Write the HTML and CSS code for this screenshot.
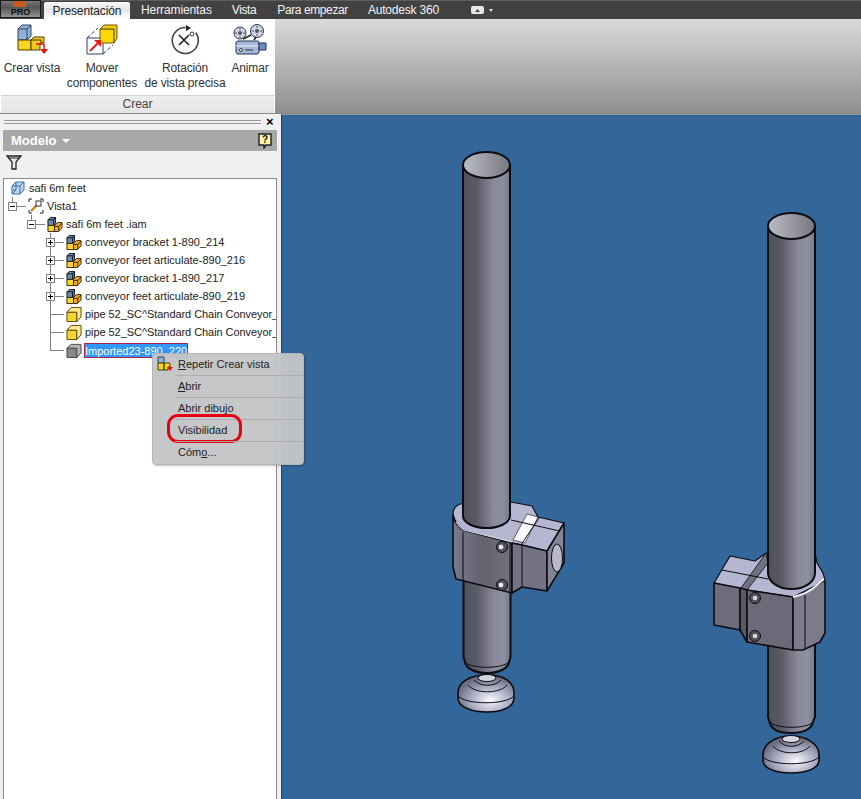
FILE: index.html
```html
<!DOCTYPE html>
<html lang="es">
<head>
<meta charset="utf-8">
<title>Presentación</title>
<link rel="stylesheet" href="styles.css">
</head>
<body>
<svg class="defs" aria-hidden="true">
  <defs>
    <linearGradient id="pipeL" x1="0" x2="1" y1="0" y2="0"><stop offset="0" stop-color="#50505c"/><stop offset=".3" stop-color="#5c5c69"/><stop offset=".65" stop-color="#8a8a9b"/><stop offset=".85" stop-color="#8f8fa2"/><stop offset="1" stop-color="#77778a"/></linearGradient>
    <linearGradient id="pipeIn" x1="0" x2="1" y1="0" y2="0"><stop offset="0" stop-color="#bcbcc6"/><stop offset="1" stop-color="#77777f"/></linearGradient>
    <linearGradient id="faceL" x1="0" x2="1" y1="0" y2="0"><stop offset="0" stop-color="#7a7a8e"/><stop offset=".5" stop-color="#62626f"/><stop offset="1" stop-color="#727280"/></linearGradient>
    <radialGradient id="foot" cx=".58" cy=".68" r=".62"><stop offset="0" stop-color="#fbfbff"/><stop offset=".55" stop-color="#adadc4"/><stop offset="1" stop-color="#6b6b80"/></radialGradient>
    <symbol id="asm" viewBox="0 0 17 17">
      <path d="M1 9.500V3.500L3.500 1H9V7L7 9.500z" fill="#6e86ab" stroke="#10151f"/>
      <path d="M1 3.500H7V9.500M7 3.500L9 1" fill="none" stroke="#10151f"/>
      <path d="M1 9.500H8V16H1z" fill="#f9d52a" stroke="#2e2504"/>
      <path d="M8 9.500L11 6.500H16V12L12 16H8z" fill="#f0aa2c" stroke="#2e2504"/>
      <path d="M8 10.500H12.500V16M12.500 10.500L16 7" fill="none" stroke="#2e2504"/>
    </symbol>
    <symbol id="part" viewBox="0 0 17 17">
      <path d="M1 16V6H11.500V16z" fill="#f7d52f" stroke="#54430a"/>
      <path d="M1 6L5.500 1H16V11L11.500 16V6z" fill="#fce98a" stroke="#54430a"/>
    </symbol>
    <symbol id="gray" viewBox="0 0 17 17">
      <path d="M1 16V6H11.500V16z" fill="#878787" stroke="#444"/>
      <path d="M1 6L5.500 2H16V11L11.500 16V6z" fill="#b5b5b5" stroke="#444"/>
    </symbol>
  </defs>
</svg>

<header class="tabbar">
  <div class="appbtn"><span class="appflame"></span><span class="apppro">PRO</span></div>
  <nav class="tabs">
    <span class="tab tab-active">Presentación</span>
    <span class="tab tab-h">Herramientas</span>
    <span class="tab tab-v">Vista</span>
    <span class="tab tab-p">Para empezar</span>
    <span class="tab tab-a">Autodesk 360</span>
    <span class="tabcam">
      <svg width="13" height="8" viewBox="0 0 13 8"><rect width="13" height="8" rx="2" fill="#e8e8e8"/><path d="M4 6l2.500-3L9 6z" fill="#444"/></svg>
      <i class="caret"></i>
    </span>
  </nav>
</header>

<section class="ribbon">
  <div class="panel">
    <div class="tools">
      <div class="tool">
        <svg class="toolicon" width="32" height="32" viewBox="0 0 32 32">
          <path d="M2 16V5l4-4h9v11l-4 4z" fill="#8fb0dc" stroke="#33425c"/>
          <path d="M2 5h9v11M11 5l4-4" fill="none" stroke="#33425c"/>
          <path d="M2 26V16h13v10z" fill="#f7d51c" stroke="#4a3d05"/>
          <path d="M15 26V16l3-3h10v6h-4v7z" fill="#f3c91d" stroke="#4a3d05"/>
          <path d="M15 16h10v3" fill="none" stroke="#4a3d05"/>
          <path d="M20 20h8M28 20v5" fill="none" stroke="#e11" stroke-width="1.500"/>
          <path d="M24 25h8l-4 5z" fill="#e11"/>
        </svg>
        <span>Crear vista</span>
      </div>
      <div class="tool">
        <svg class="toolicon" width="32" height="32" viewBox="0 0 32 32">
          <path d="M1 30V14h16v16z" fill="#fff" stroke="#2f3f6a"/>
          <path d="M1 14l11-10M17 30l10-9" fill="none" stroke="#2f3f6a" stroke-dasharray="4 2"/>
          <path d="M14 19V5h14v14z" fill="#ffd80a" stroke="#6b5a05"/>
          <path d="M14 5l4-4h13v13l-3 5V5z" fill="#f3c81a" stroke="#6b5a05"/>
          <path d="M4 27l9-9" stroke="#e21b1b" stroke-width="2"/>
          <path d="M8 16h7v7z" fill="#e21b1b"/>
        </svg>
        <span>Mover<br>componentes</span>
      </div>
      <div class="tool">
        <svg class="toolicon" width="32" height="32" viewBox="0 0 32 32">
          <path d="M19 4A13 13 0 1 0 28 11" fill="none" stroke="#444" stroke-width="1.600" transform="rotate(-10 15 17)"/>
          <path d="M17 1l5 3-5 3z" fill="#222"/>
          <path d="M10 11l10 10M20 11L10 21" stroke="#222" stroke-width="1.600"/>
          <circle cx="23" cy="10" r="2" fill="none" stroke="#333"/>
        </svg>
        <span>Rotación<br>de vista precisa</span>
      </div>
      <div class="tool">
        <svg class="toolicon" width="34" height="32" viewBox="0 0 34 32">
          <circle cx="7" cy="9" r="6" fill="#cfd5e2" stroke="#2b3040"/>
          <circle cx="7" cy="9" r="2" fill="#4d5468"/>
          <path d="M7 4v2M7 12v2M2 9h2M10 9h2" stroke="#4d5468"/>
          <circle cx="24" cy="7" r="6.500" fill="#cfd5e2" stroke="#2b3040"/>
          <circle cx="24" cy="7" r="2" fill="#4d5468"/>
          <path d="M24 2v2M24 10v2M19 7h2M27 7h2" stroke="#4d5468"/>
          <path d="M10 15l8-4M21 16l2-3" stroke="#222" stroke-width="1.600"/>
          <rect x="3" y="17" width="23" height="13" rx="2" fill="#a6b8da" stroke="#26304c"/>
          <path d="M3 22h23" stroke="#eef2fa"/>
          <path d="M26 19h7v7h-7z" fill="#6f8fc9" stroke="#26304c"/>
          <circle cx="8" cy="26" r="1.500" fill="#fff" stroke="#333"/>
          <path d="M12 26h8" stroke="#333"/>
        </svg>
        <span>Animar</span>
      </div>
    </div>
    <div class="panelname">Crear</div>
  </div>
  <div class="ribbonfill"></div>
</section>

<main class="work">
  <aside class="browser">
    <div class="griprow"><span class="grip"></span><span class="close">×</span></div>
    <div class="modelhead">
      <span class="modeltitle">Modelo</span><i class="modelcaret"></i>
      <svg class="help" width="14" height="16" viewBox="0 0 14 16"><path d="M1 1h12v11H8l-2 3v-3H1z" fill="#fdf6a8" stroke="#222" stroke-width="1.400"/><text x="7" y="10" class="helpq">?</text></svg>
    </div>
    <div class="filter">
      <svg width="16" height="15" viewBox="0 0 16 15"><path d="M1 1h14L10 7v7H6V7z" fill="#e8e8e8" stroke="#222" stroke-width="1.300"/><path d="M3 3h10" stroke="#222"/></svg>
    </div>
    <div class="tree">
      <div class="row row-root">
        <svg class="ticon" width="16" height="16" viewBox="0 0 16 16"><path d="M2 6l4-4h8v8l-4 4H2z" fill="#bcd6ee" stroke="#3a6ea5"/><path d="M2 6h8v8M10 6l4-4M6 2v8H2M6 10l-4 4" fill="none" stroke="#3a6ea5"/></svg>
        <span class="label">safi 6m feet</span>
      </div>
      <div class="row l1">
        <span class="twist v-up"><b class="box minus"></b></span>
        <svg class="ticon" width="16" height="16" viewBox="0 0 16 16"><path d="M1 4V1h3M12 1h3v3M15 12v3h-3M4 15H1v-3" fill="none" stroke="#222"/><path d="M3 13l6-6" stroke="#c9851a" stroke-width="2.400"/><rect x="8" y="3" width="5" height="5" fill="#fff" stroke="#333"/></svg>
        <span class="label">Vista1</span>
      </div>
      <div class="row l2">
        <span class="twist v-up"><b class="box minus"></b></span>
        <svg class="ticon" width="16" height="17"><use href="#asm"/></svg>
        <span class="label">safi 6m feet .iam</span>
      </div>
      <div class="row l3">
        <span class="twist v-full"><b class="box plus"></b></span>
        <svg class="ticon" width="16" height="17"><use href="#asm"/></svg>
        <span class="label">conveyor bracket 1-890_214</span>
      </div>
      <div class="row l3">
        <span class="twist v-full"><b class="box plus"></b></span>
        <svg class="ticon" width="16" height="17"><use href="#asm"/></svg>
        <span class="label">conveyor feet articulate-890_216</span>
      </div>
      <div class="row l3">
        <span class="twist v-full"><b class="box plus"></b></span>
        <svg class="ticon" width="16" height="17"><use href="#asm"/></svg>
        <span class="label">conveyor bracket 1-890_217</span>
      </div>
      <div class="row l3">
        <span class="twist v-full"><b class="box plus"></b></span>
        <svg class="ticon" width="16" height="17"><use href="#asm"/></svg>
        <span class="label">conveyor feet articulate-890_219</span>
      </div>
      <div class="row l3">
        <span class="twist v-full"></span>
        <svg class="ticon" width="16" height="17"><use href="#part"/></svg>
        <span class="label label-long">pipe 52_SC^Standard Chain Conveyor_</span>
      </div>
      <div class="row l3">
        <span class="twist v-full"></span>
        <svg class="ticon" width="16" height="17"><use href="#part"/></svg>
        <span class="label label-long">pipe 52_SC^Standard Chain Conveyor_</span>
      </div>
      <div class="row l3">
        <span class="twist v-up"></span>
        <svg class="ticon" width="16" height="17"><use href="#gray"/></svg>
        <span class="label selected">Imported23-890_220</span>
      </div>
    </div>
  </aside>

  <div class="viewport">
    <svg class="cad" width="580" height="685" viewBox="281 114 580 685">
      <g stroke="#0c0c12" stroke-width="1.600" stroke-linejoin="round">
        <!-- left assembly: foot, lower pipe, clamp, upper pipe -->
        <path d="M458 693C458 682 470 675 487 675S514 682 514 693V698C514 708 500 712 487 712S458 708 458 698z" fill="url(#foot)"/>
        <path d="M458 696C466 705 506 705 514 696M468 685C475 694 500 694 507 685M474 680C480 687 495 687 501 680" fill="none" stroke-width="1"/>
        <ellipse cx="487" cy="678" rx="9" ry="3.500" fill="#d5d5e0" stroke-width="1"/>
        <path d="M463.500 570V657L465 662C466 668 474 673 487 673S508 668 509 662L510.500 657V570z" fill="url(#pipeL)" stroke-width="2"/>
        <path d="M465 662C470 669 503 669 509 662" fill="none" stroke-width="1"/>
        <path d="M453 514Q453 507 460 504L511 502 532 506 538 517 564 523 547 551 522 545 512 543 463 530Q455 524 453 514z" fill="#b6b6d2" stroke-width="1.200"/>
        <path d="M527 514L538 517 525 543 513 540z" fill="#f6f6fb" stroke-width=".6"/>
        <path d="M511 520L564 532M539 518L521 545" fill="none" stroke-width="1"/>
        <path d="M453 515Q455 525 463 530L512 543V593L456 579 453 567z" fill="url(#faceL)"/>
        <path d="M456 522Q459 528 464 530L512 542" fill="none" stroke="#e8e8f2" stroke-width="1"/>
        <path d="M463 532V581M510 543V592" fill="none" stroke-width="1"/>
        <path d="M512 543L522 545 547 551V591L522 587 512 593z" fill="#737383"/>
        <path d="M522 545V587" fill="none" stroke-width="1"/>
        <path d="M547 551L564 523V563L547 591z" fill="#85859a"/>
        <ellipse cx="557" cy="558" rx="5.500" ry="14" fill="#b8b8c8" stroke-width="1"/>
        <circle cx="502" cy="547" r="5.500" fill="#53535f" stroke-width="1"/><circle cx="501" cy="547" r="2.800" fill="#eee" stroke-width=".5"/>
        <circle cx="502" cy="585" r="5.500" fill="#53535f" stroke-width="1"/><circle cx="501" cy="585" r="2.800" fill="#eee" stroke-width=".5"/>
        <path d="M463 165V516A23.500 12 0 0 0 510 516V165z" fill="url(#pipeL)" stroke-width="2"/>
        <ellipse cx="486.500" cy="165" rx="23.500" ry="13" fill="url(#pipeIn)" stroke-width="2"/>

        <!-- right assembly -->
        <path d="M763 755C763 744 775 736 791 736S819 744 819 755V760C819 769 805 773 791 773S763 769 763 760z" fill="url(#foot)"/>
        <path d="M763 757C771 766 811 766 819 757M773 746C780 755 803 755 810 746M779 741C785 748 798 748 804 741" fill="none" stroke-width="1"/>
        <ellipse cx="791" cy="739" rx="9" ry="3.500" fill="#d5d5e0" stroke-width="1"/>
        <path d="M768 630V717L769.500 722C771 729 779 733 791 733S812 729 813 722L815 717V630z" fill="url(#pipeL)" stroke-width="2"/>
        <path d="M770 722C775 729 808 729 813 722" fill="none" stroke-width="1"/>
        <path d="M714 583L730 556 755 561 766 553H815L817 563 823 573 825 580 817 585 793 597 747 590z" fill="#b6b6d2" stroke-width="1.200"/>
        <path d="M766 553L741 588 747 590 768 563z" fill="#70707e" stroke-width=".8"/>
        <path d="M722 570L768 579" fill="none" stroke-width="1"/>
        <path d="M714 583L740 588V630L714 625z" fill="#6d6d7b"/>
        <path d="M740 588L747 590V642L740 630z" fill="#5a5a66"/>
        <path d="M747 590L793 597V650L747 642z" fill="#6a6a78"/>
        <path d="M793 597Q808 594 817 585L825 580V633L820 642 803 650H793z" fill="#7b7b8c"/>
        <path d="M805 595V648" fill="none" stroke-width="1"/>
        <path d="M793 597Q808 594 817 585L824 579" fill="none" stroke="#f2f2f8" stroke-width="1.800"/>
        <circle cx="755" cy="598" r="5.500" fill="#53535f" stroke-width="1"/><circle cx="755" cy="598" r="2.800" fill="#d8d8d8" stroke-width=".5"/>
        <circle cx="755" cy="636" r="5.500" fill="#53535f" stroke-width="1"/><circle cx="755" cy="636" r="2.800" fill="#d8d8d8" stroke-width=".5"/>
        <path d="M768 226V573A23.500 16 0 0 0 815 573V226z" fill="url(#pipeL)" stroke-width="2"/>
        <ellipse cx="791.500" cy="226" rx="23.500" ry="13" fill="url(#pipeIn)" stroke-width="2"/>
      </g>
    </svg>
  </div>
</main>

<div class="ctxmenu">
  <div class="ctxitem">
    <svg class="ctxicon" width="16" height="16" viewBox="0 0 16 16"><path d="M1 7V1h6v6z" fill="#8fb0dc" stroke="#33425c"/><path d="M1 14V7h6v7zM7 14V7h6v4h-2v3z" fill="#f7d51c" stroke="#4a3d05"/><path d="M10 11h6l-3 4z" fill="#e11"/></svg>
    <span><u>R</u>epetir Crear vista</span>
  </div>
  <div class="ctxitem"><span><u>A</u>brir</span></div>
  <div class="ctxitem"><span>Abrir dibujo</span></div>
  <div class="ctxitem ctxmark"><span>Visibilidad</span></div>
  <div class="ctxitem"><span>Cóm<u>o</u>...</span></div>
</div>
</body>
</html>
```
FILE: styles.css
```css
* { box-sizing: border-box; }
html, body { margin: 0; padding: 0; }
body {
  width: 861px;
  height: 799px;
  overflow: hidden;
  position: relative;
  font-family: "Liberation Sans", Arial, sans-serif;
  font-size: 11px;
  color: #1c1c1c;
  background: #f0f0f0;
}
.defs { position: absolute; width: 0; height: 0; }

/* Tab bar */
.tabbar {
  height: 19px;
  display: flex;
  background: #424242;
  border-top: 1px solid #5d5d5d;
}
.appbtn {
  width: 41px;
  height: 18px;
  margin-top: -1px;
  position: relative;
  background: linear-gradient(#777, #555 40%, #949494);
  border: 1px solid #1a1a1a;
  overflow: hidden;
  display: flex;
  justify-content: center;
  align-items: flex-end;
}
.appflame {
  position: absolute;
  left: 12px;
  top: 0;
  width: 13px;
  height: 6px;
  background: #c75a1c;
}
.apppro {
  font-size: 9px;
  font-weight: bold;
  color: #111;
  line-height: 10px;
}
.tabs {
  display: flex;
  flex: 1;
  align-items: stretch;
  margin-left: 3px;
  color: #f2f2f2;
  font-size: 12px;
}
.tab { display: flex; align-items: center; }
.tab-active {
  width: 86px;
  justify-content: center;
  margin-top: 1px;
  color: #222;
  letter-spacing: -.1px;
  background: linear-gradient(#f8f8f8, #e6e6e6 45%, #ffffff);
  border-radius: 2px 2px 0 0;
}
.tab-h { margin-left: 11px; letter-spacing: -.1px; }
.tab-v { margin-left: 20px; letter-spacing: -.4px; }
.tab-p { margin-left: 21px; letter-spacing: -.4px; }
.tab-a { margin-left: 20px; letter-spacing: -.2px; }
.tabcam { display: flex; align-items: center; gap: 5px; margin-left: 32px; }
.caret {
  width: 0;
  height: 0;
  border-left: 2.5px solid transparent;
  border-right: 2.5px solid transparent;
  border-top: 3px solid #ddd;
}

/* Ribbon */
.ribbon { display: flex; height: 95px; border-bottom: 1px solid #8a8a8a; }
.panel { width: 275px; background: #fff; display: flex; flex-direction: column; }
.tools {
  height: 76px;
  display: grid;
  grid-template-columns: 64px 76px 90px 40px;
  font-size: 12px;
  line-height: 15px;
  letter-spacing: -.15px;
  color: #333;
  text-align: center;
}
.tool { display: flex; flex-direction: column; align-items: center; padding-top: 5px; white-space: nowrap; }
.toolicon { flex: none; margin-bottom: 5px; }
.panelname {
  height: 18px;
  margin: 0 1px;
  background: linear-gradient(#eeeeee, #e4e4e4);
  border-top: 1px solid #d0d0d0;
  text-align: center;
  line-height: 17px;
  font-size: 12px;
  color: #444;
}
.ribbonfill { flex: 1; background: linear-gradient(#dadada, #8f8f8f); }

/* Work area */
.work { display: flex; height: 685px; }
.browser { width: 281px; background: #f0f0f0; display: flex; flex-direction: column; }
.griprow { height: 16px; display: flex; align-items: center; padding: 0 6px 0 4px; gap: 5px; }
.grip { flex: 1; height: 4px; border-top: 1px solid #9a9a9a; border-bottom: 1px solid #9a9a9a; }
.close { font-size: 13px; font-weight: bold; line-height: 12px; color: #000; width: 9px; }
.modelhead {
  height: 21px;
  margin: 0 4px 0 3px;
  background: #a8a8a8;
  display: flex;
  align-items: center;
  padding: 0 5px 0 8px;
  color: #fff;
}
.modeltitle { font-size: 13px; font-weight: bold; }
.modelcaret {
  width: 0;
  height: 0;
  margin-left: 5px;
  border-left: 4px solid transparent;
  border-right: 4px solid transparent;
  border-top: 4px solid #fff;
}
.help { margin-left: auto; }
.helpq { font-size: 10px; font-weight: bold; text-anchor: middle; fill: #111; }
.filter { height: 27px; padding: 4px 0 0 6px; }
.tree {
  flex: 1;
  margin: 0 4px 0 3px;
  background: #fff;
  border: 1px solid #8a8a8a;
  border-bottom: 0;
  padding: 0 0 0 4px;
  overflow: hidden;
  color: #222;
}
.row { height: 18px; display: flex; align-items: center; white-space: nowrap; }
.row-root { padding-left: 2px; }
.row-root .ticon { margin: 0 3px 0 0; }
.l1 { padding-left: 0; }
.l2 { padding-left: 19px; }
.l3 { padding-left: 38px; }
.ticon { flex: none; margin: 0 3px 0 1px; }
.label { line-height: 14px; }
.label-long { letter-spacing: -.06px; }
.selected {
  background: #3399ff;
  color: #fff;
  border: 1px solid #b01e4a;
  margin-left: -1px;
  height: 15px;
}
.twist { flex: none; width: 19px; height: 18px; position: relative; }
.twist::before {
  content: "";
  position: absolute;
  left: 4px;
  top: 0;
  width: 1px;
  background: #808080;
}
.v-up::before { height: 9px; }
.v-full::before { height: 18px; }
.twist::after {
  content: "";
  position: absolute;
  left: 4px;
  top: 9px;
  width: 14px;
  height: 1px;
  background: #808080;
}
.box {
  position: absolute;
  left: 0;
  top: 5px;
  width: 9px;
  height: 9px;
  background: #fff;
  border: 1px solid #808080;
  z-index: 1;
}
.box::before {
  content: "";
  position: absolute;
  left: 1px;
  top: 3px;
  width: 5px;
  height: 1px;
  background: #000;
}
.plus::after {
  content: "";
  position: absolute;
  left: 3px;
  top: 1px;
  width: 1px;
  height: 5px;
  background: #000;
}

/* Viewport */
.viewport { flex: 1; background: #336699; border-left: 1px solid #2b3f56; border-top: 1px solid #8f9aa6; overflow: hidden; }
.cad { display: block; margin: -1px 0 0 -1px; }

/* Context menu */
.ctxmenu {
  position: absolute;
  left: 152px;
  top: 353px;
  width: 152px;
  height: 112px;
  background: rgba(196, 197, 199, .96);
  border: 1px solid #b5b5b5;
  border-radius: 4px;
  box-shadow: 1px 1px 2px rgba(0, 0, 0, .25);
  color: #222;
}
.ctxitem {
  height: 22px;
  padding-left: 25px;
  padding-bottom: 2px;
  display: flex;
  align-items: center;
  position: relative;
}
.ctxitem + .ctxitem::before {
  content: "";
  position: absolute;
  left: 22px;
  right: 0;
  top: -1px;
  height: 1px;
  background: #adadad;
}
.ctxicon { position: absolute; left: 4px; top: 2px; }
.ctxmark::after {
  content: "";
  position: absolute;
  left: 14px;
  top: -6px;
  width: 69px;
  height: 23px;
  border: 3px solid #e60012;
  border-radius: 11px;
}
```
